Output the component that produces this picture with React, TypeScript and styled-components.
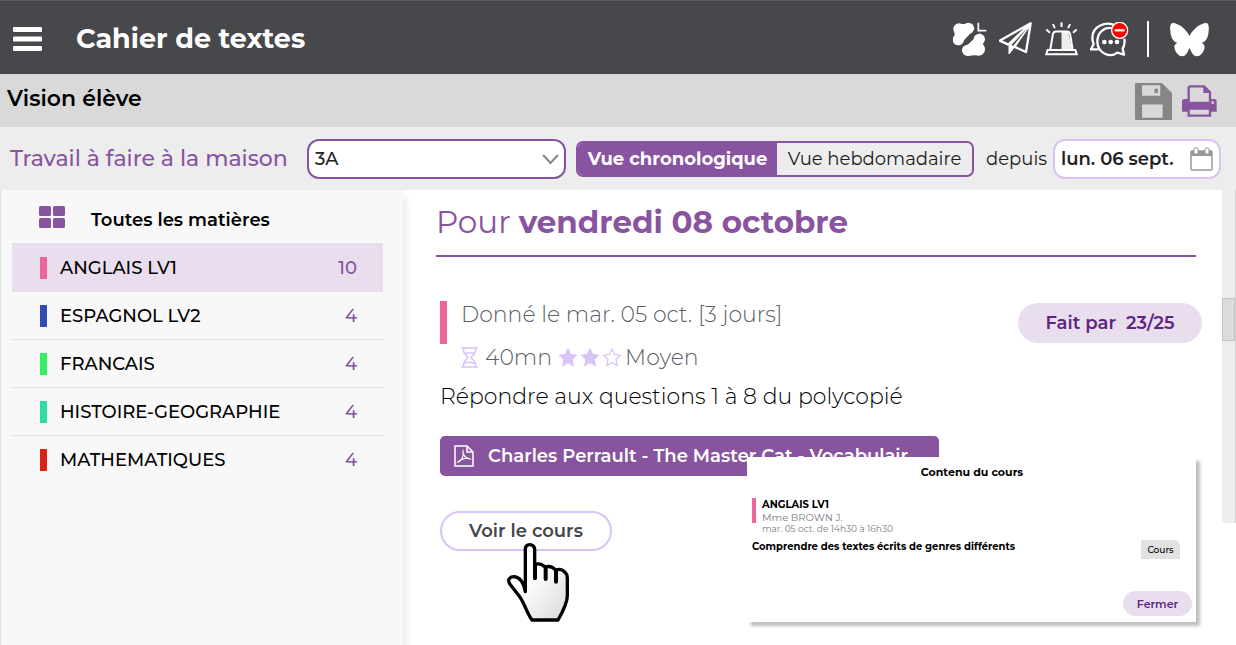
import React, { useState } from "react";
import styled, { createGlobalStyle } from "styled-components";

const purple = "#8854a0";
const deepPurple = "#5f2583";
const lilac = "#e9deee";
const lavender = "#d9c3f7";
const pink = "#ee6699";

const GlobalStyle = createGlobalStyle`
  * { box-sizing: border-box; }
  body {
    margin: 0;
    background: #fff;
    color: #000;
    font-family: Montserrat, Inter, "Liberation Sans", sans-serif;
  }
  button, input, select { font-family: inherit; }
  h1, h2, p, ul { margin: 0; padding: 0; }
`;

const Page = styled.div`
  min-height: 100vh;
  display: flex;
  flex-direction: column;
`;

const Header = styled.header`
  height: 74px;
  display: flex;
  align-items: center;
  padding: 3px 26px 0 12px;
  background: #47484c;
  border-top: 1px solid #5a5b5f;
  color: #fff;
`;

const IconButton = styled.button`
  display: flex;
  padding: 0;
  border: 0;
  background: none;
  color: inherit;
  cursor: pointer;
`;

const AppTitle = styled.h1`
  flex: 1;
  margin-left: 34px;
  font-size: 27px;
  line-height: 36px;
  font-weight: 700;
`;

const HeaderTools = styled.div`
  display: flex;
  align-items: center;
  gap: 12px;
`;

const Separator = styled.span`
  width: 2px;
  height: 36px;
  margin: 0 8px 0 6px;
  background: #fff;
`;

const SubHeader = styled.div`
  height: 53px;
  display: flex;
  align-items: center;
  justify-content: space-between;
  padding: 0 19px 0 7px;
  background: #d9d9d9;
`;

const SubTitle = styled.h2`
  margin-bottom: 4px;
  font-size: 22px;
  line-height: 28px;
  font-weight: 600;
`;

const SubTools = styled.div`
  display: flex;
  align-items: center;
  gap: 10px;
  padding-top: 2px;
  color: ${purple};
`;

const FilterBar = styled.div`
  height: 63px;
  display: flex;
  align-items: center;
  padding: 0 15px 0 10px;
  background: #ededed;
`;

const FilterLabel = styled.label`
  width: 297px;
  color: ${purple};
  font-size: 22px;
  font-weight: 500;
  white-space: nowrap;
`;

const SelectBox = styled.div`
  position: relative;
  flex: 1;
  svg {
    position: absolute;
    right: 7px;
    top: 14px;
    pointer-events: none;
  }
`;

const Select = styled.select`
  display: block;
  width: 100%;
  height: 40px;
  padding: 0 6px;
  appearance: none;
  border: 2px solid ${purple};
  border-radius: 12px;
  background: #fff;
  color: #222;
  font-size: 18px;
  font-weight: 500;
`;

const Toggle = styled.div`
  width: 398px;
  height: 36px;
  display: flex;
  margin: 0 12px 0 10px;
  border: 2px solid ${purple};
  border-radius: 7px;
  overflow: hidden;
`;

const ToggleOption = styled.button<{ $active: boolean }>`
  flex: ${(p) => (p.$active ? "1 0 199px" : "1 0 195px")};
  padding: 0;
  border: 0;
  background: ${(p) => (p.$active ? purple : "transparent")};
  color: ${(p) => (p.$active ? "#fff" : "#1c1c1c")};
  font-size: 18px;
  font-weight: ${(p) => (p.$active ? 700 : 400)};
  white-space: nowrap;
`;

const SinceLabel = styled.label`
  width: 67px;
  font-size: 18px;
  color: #1c1c1c;
`;

const DateBox = styled.div`
  width: 168px;
  height: 40px;
  display: flex;
  align-items: center;
  padding: 0 6px;
  border: 2px solid ${lavender};
  border-radius: 12px;
  background: #fff;
  color: #999;
`;

const DateInput = styled.input`
  flex: 1;
  min-width: 0;
  padding: 0;
  border: 0;
  background: none;
  color: #222;
  font-size: 18px;
  font-weight: 600;
`;

const Body = styled.div`
  flex: 1;
  display: flex;
`;

const Sidebar = styled.nav`
  position: relative;
  width: 403px;
  padding: 5px 20px 0 11px;
  background: #f8f8f8;
  border-left: 1px solid #e2e2e2;
  box-shadow: 3px 8px 8px rgba(0, 0, 0, 0.1);
`;

const AllSubjects = styled.button`
  width: 100%;
  height: 48px;
  display: flex;
  align-items: center;
  gap: 26px;
  padding: 2px 27px 0;
  border: 0;
  background: none;
  font-size: 18px;
  font-weight: 600;
  color: #000;
  svg { margin-bottom: 6px; }
`;

const SubjectList = styled.ul`
  list-style: none;
`;

const SubjectItem = styled.li`
  & + & { border-top: 1px solid ${lilac}; }
`;

const SubjectButton = styled.button<{ $active: boolean }>`
  width: 100%;
  height: ${(p) => (p.$active ? 48 : 47)}px;
  display: flex;
  align-items: center;
  gap: 13px;
  padding: 1px 26px 0 28px;
  border: 0;
  background: ${(p) => (p.$active ? lilac : "transparent")};
  color: #000;
  font-size: 18px;
  font-weight: 500;
  text-align: left;
`;

const SubjectName = styled.span`
  flex: 1;
`;

const SubjectCount = styled.span`
  color: ${purple};
`;

const Marker = styled.span<{ $color: string }>`
  width: 7px;
  height: 22px;
  background: ${(p) => p.$color};
`;

const Main = styled.main`
  position: relative;
  flex: 1;
  padding: 10px 26px 0 33px;
`;

const DayTitle = styled.h2`
  height: 57px;
  padding-top: 2px;
  border-bottom: 2px solid ${purple};
  color: ${purple};
  font-size: 31px;
  line-height: 40px;
  font-weight: 400;
  strong { font-weight: 700; }
`;

const Homework = styled.article`
  padding: 44px 0 0 4px;
`;

const HomeworkTop = styled.div`
  display: flex;
  align-items: flex-start;
  justify-content: space-between;
  margin-right: -6px;
`;

const HomeworkMeta = styled.div`
  display: flex;
  gap: 14px;
  color: #5c5f68;
  font-size: 22px;
  line-height: 27px;
  font-weight: 300;
`;

const MetaBar = styled.span`
  width: 7px;
  height: 43px;
  background: ${pink};
`;

const MetaLines = styled.div`
  display: flex;
  flex-direction: column;
  gap: 16px;
`;

const MetaRow = styled.div`
  display: flex;
  align-items: center;
  gap: 7px;
`;

const Difficulty = styled.span`
  display: flex;
  align-items: center;
  gap: 4px;
`;

const DoneBadge = styled.button`
  width: 184px;
  height: 40px;
  margin-top: 2px;
  border: 0;
  border-radius: 20px;
  background: ${lilac};
  color: ${deepPurple};
  font-size: 18px;
  font-weight: 600;
`;

const Instruction = styled.p`
  margin-top: 12px;
  font-size: 22px;
  line-height: 28px;
  font-weight: 300;
`;

const Attachment = styled.a`
  width: 499px;
  height: 40px;
  display: flex;
  align-items: center;
  gap: 14px;
  margin-top: 25px;
  padding: 0 14px;
  border-radius: 5px;
  background: ${purple};
  color: #fff;
  font-size: 18px;
  font-weight: 600;
  text-decoration: none;
  white-space: nowrap;
`;

const CourseAction = styled.div`
  position: relative;
  width: 172px;
  margin-top: 35px;
`;

const CourseButton = styled.button`
  width: 100%;
  height: 40px;
  border: 2px solid ${lavender};
  border-radius: 20px;
  background: #fff;
  color: #45464a;
  font-size: 18px;
  font-weight: 600;
`;

const Pointer = styled.svg`
  position: absolute;
  left: 67px;
  top: 32px;
  pointer-events: none;
`;

const Dialog = styled.section`
  position: absolute;
  top: 267px;
  right: 26px;
  width: 449px;
  height: 165px;
  padding: 7px 4px 6px 5px;
  display: flex;
  flex-direction: column;
  background: #fff;
  box-shadow: 4px 4px 3px rgba(0, 0, 0, 0.25);
  font-size: 10px;
  line-height: 14px;
`;

const DialogTitle = styled.h2`
  font-size: 11px;
  line-height: 16px;
  font-weight: 700;
  text-align: center;
`;

const Lesson = styled.div`
  display: flex;
  gap: 6px;
  margin-top: 18px;
`;

const LessonBar = styled.span`
  width: 4px;
  height: 25px;
  background: ${pink};
`;

const LessonText = styled.div`
  display: flex;
  flex-direction: column;
  line-height: 13px;
  color: #7b7d84;
  strong { color: #000; font-weight: 700; }
  small { font-size: 9px; line-height: 10px; }
`;

const LessonRow = styled.div`
  display: flex;
  align-items: flex-start;
  justify-content: space-between;
  margin-top: 6px;
  padding-right: 12px;
  font-weight: 700;
`;

const Tag = styled.span`
  width: 39px;
  height: 19px;
  background: #e1e1e1;
  clip-path: polygon(0 0, 35px 0, 100% 4px, 100% 100%, 0 100%);
  font-size: 9px;
  line-height: 19px;
  font-weight: 500;
  text-align: center;
`;

const CloseButton = styled.button`
  width: 69px;
  height: 25px;
  margin-top: auto;
  align-self: flex-end;
  border: 0;
  border-radius: 13px;
  background: ${lilac};
  color: ${deepPurple};
  font-size: 11px;
  font-weight: 600;
`;

const ScrollTrack = styled.div`
  width: 14px;
  height: 333px;
  padding-top: 108px;
  background: #ededed;
  border-right: 1px solid #d2d2d2;
`;

const ScrollThumb = styled.div`
  height: 43px;
  background: #dadcdd;
  border: 1px solid #c3c3c3;
`;

const MenuIcon = () => (
  <svg width="30" height="26" viewBox="0 0 30 26" fill="currentColor" aria-hidden>
    <rect x="1" y="1" width="29" height="5" rx="1" />
    <rect x="1" y="10.500" width="29" height="5" rx="1" />
    <rect x="1" y="20" width="29" height="5" rx="1" />
  </svg>
);

const CloverIcon = () => (
  <svg width="34" height="34" viewBox="3 0 102 102" aria-hidden>
    <g fill="#fff">
      <circle cx="21" cy="21" r="17" />
      <circle cx="49" cy="19" r="17" />
      <circle cx="19" cy="53" r="17" />
      <path d="M22 6H50L68 20L22 70L4 53L8 38L6 21Z" />
      <circle cx="82" cy="52" r="17" />
      <circle cx="80" cy="82" r="19" />
      <circle cx="47" cy="85" r="17" />
      <path d="M84 34L30 84L48 101L82 99L97 80L92 66L97 50Z" />
    </g>
    <path d="M16 84L82 22" stroke="#47484c" strokeWidth="6" />
    <path d="M79 2V26H103" fill="none" stroke="#fff" strokeWidth="5" />
  </svg>
);

const PlaneIcon = () => (
  <svg width="34" height="34" viewBox="3 0 102 102" fill="none" stroke="#fff" strokeWidth="7" strokeLinejoin="round" aria-hidden>
    <path d="M98 4L5 56L31 68ZM98 4L84 90L49 74Z" />
    <path d="M98 4L33 72V96L49 76Z" fill="#fff" strokeWidth="3" />
    <path d="M90 16L40 69L46 71Z" fill="#47484c" stroke="none" />
  </svg>
);

const SirenIcon = () => (
  <svg width="33" height="34" viewBox="0 0 100 102" fill="none" stroke="#fff" strokeWidth="6" aria-hidden>
    <defs>
      <pattern id="dots" width="6" height="6" patternUnits="userSpaceOnUse">
        <rect width="3" height="3" fill="#fff" />
        <rect x="3" y="3" width="3" height="3" fill="#fff" />
      </pattern>
    </defs>
    <path d="M50 28H70L82 82H50Z" fill="url(#dots)" fillOpacity="0.9" stroke="none" />
    <path d="M16 84L24 36Q26 28 34 28H66Q74 28 76 36L84 84" />
    <path d="M8 84H92L96 97H4Z" />
    <path d="M50 0V15M24 6L30 18M76 6L70 18M4 22L15 32M96 22L85 32" />
  </svg>
);

const ChatIcon = () => (
  <svg width="39" height="35" viewBox="0 0 117 105" fill="none" stroke="#fff" strokeWidth="7" strokeLinejoin="round" aria-hidden>
    <path d="M76 10C46 -4 8 14 7 46C7 58 9 62 11 66L3 82L26 82" />
    <path d="M72 20C40 10 22 36 22 58C22 96 62 108 82 92L102 98L98 80C104 70 105 62 103 50" />
    <g fill="#fff" stroke="none">
      <circle cx="43" cy="60" r="7" />
      <circle cx="62" cy="60" r="7" />
      <circle cx="81" cy="60" r="7" />
    </g>
    <circle cx="89" cy="25" r="24" fill="#ff0000" strokeWidth="4" />
    <path d="M74 25H104" strokeWidth="7" />
  </svg>
);

const ButterflyIcon = () => (
  <svg width="41" height="35" viewBox="0 0 122 105" fill="#fff" aria-hidden>
    <path d="M61 42C50 20 28 4 11 3C1 3 2 24 5 38C8 52 15 60 25 62C12 68 14 80 22 92C32 106 46 106 54 92L61 78L68 92C76 106 90 106 100 92C108 80 110 68 97 62C107 60 114 52 117 38C120 24 121 3 111 3C94 4 72 20 61 42Z" />
  </svg>
);

const SaveIcon = () => (
  <svg width="37" height="37" viewBox="0 0 110 110" aria-hidden>
    <path d="M4 0H80L110 30V106Q110 110 106 110H4Q0 110 0 106V4Q0 0 4 0Z" fill="#868686" />
    <path d="M21 7H75V38H21Z M21 64H82V103H21Z" fill="#d9d9d9" />
    <path d="M58 17H68V30H58Z" fill="#868686" />
  </svg>
);

const PrinterIcon = () => (
  <svg width="35" height="33" viewBox="0 0 105 99" aria-hidden>
    <path d="M20 50V8Q20 4 24 4H66L84 22V50" fill="none" stroke={purple} strokeWidth="7" />
    <path d="M64 2V24H86Z" fill={purple} />
    <path d="M8 42H18V50H86V42H97Q104 42 104 50V80H0V50Q0 42 8 42Z" fill={purple} />
    <path d="M20 71H84V92H20Z" fill="#d9d9d9" stroke={purple} strokeWidth="7" />
    <circle cx="92" cy="53" r="4" fill="#d9d9d9" />
  </svg>
);

const CalendarIcon = () => (
  <svg width="23" height="24" viewBox="0 0 23 24" fill="none" stroke="currentColor" aria-hidden>
    <rect x="1" y="4" width="21" height="19" rx="1" strokeWidth="1.500" />
    <path d="M1 4H22V9H1Z" fill="currentColor" stroke="none" />
    <rect x="4" y="1" width="4" height="6" rx="1" fill="#fff" />
    <rect x="15" y="1" width="4" height="6" rx="1" fill="#fff" />
  </svg>
);

const ChevronIcon = () => (
  <svg width="17" height="12" viewBox="0 0 17 12" fill="none" stroke="#888" strokeWidth="2" aria-hidden>
    <path d="M1 2L8.500 10L16 2" />
  </svg>
);

const GridIcon = () => (
  <svg width="26" height="22" viewBox="0 0 26 22" fill={purple} aria-hidden>
    <rect width="12" height="10" rx="1.500" />
    <rect x="14" width="12" height="10" rx="1.500" />
    <rect y="12" width="12" height="10" rx="1.500" />
    <rect x="14" y="12" width="12" height="10" rx="1.500" />
  </svg>
);

const HourglassIcon = () => (
  <svg width="17" height="21" viewBox="0 0 17 21" fill="none" stroke={lavender} strokeWidth="1.500" aria-hidden>
    <path d="M0 1H17M0 20H17M2.500 1V4C2.500 8 7 9 7 10.500C7 12 2.500 13 2.500 17V20M14.500 1V4C14.500 8 10 9 10 10.500C10 12 14.500 13 14.500 17V20M4 6H13M4 17C5 14.500 12 14.500 13 17" />
  </svg>
);

const StarIcon = ({ filled }: { filled: boolean }) => (
  <svg width="18" height="19" viewBox="0 0 18 19" fill={filled ? lavender : "none"} stroke={lavender} strokeWidth="1.300" aria-hidden>
    <path d="M9 1L11.500 6.500L17.300 7.200L13 11.300L14.200 17.500L9 14.500L3.800 17.500L5 11.300L0.700 7.200L6.500 6.500Z" />
  </svg>
);

const PdfIcon = () => (
  <svg width="20" height="22" viewBox="0 0 20 22" fill="none" stroke="#fff" strokeWidth="1.500" aria-hidden>
    <path d="M1 1H13L19 7V21H1ZM13 1V7H19" />
    <path d="M9 6C8 9 12 14 16 14C13 12 7 14 4 17C8 16 10 10 9 6Z" strokeWidth="1.200" />
  </svg>
);

const HandPointer = () => (
  <Pointer width="62" height="79" viewBox="0 0 186 237" aria-hidden>
    <defs>
      <linearGradient id="hand" x1="0" y1="0" x2="1" y2="1">
        <stop offset="0.400" stopColor="#fff" />
        <stop offset="1" stopColor="#d8d8d8" />
      </linearGradient>
    </defs>
    <path
      d="M55 146V20Q55 5 68 5Q82 5 83 20V65Q100 58 114 72Q134 66 146 82Q162 74 174 88Q181 94 181 104V158Q181 182 153 231H75C58 208 52 178 36 158L9 124C-1 108 10 101 22 101C40 103 50 118 55 146Z"
      fill="url(#hand)" stroke="#000" strokeWidth="10" strokeLinejoin="round"
    />
    <path d="M84 62V106M116 72V108M147 84V116" stroke="#000" strokeWidth="12" strokeLinecap="round" />
  </Pointer>
);

const subjects = [
  { name: "ANGLAIS LV1", count: 10, color: pink },
  { name: "ESPAGNOL LV2", count: 4, color: "#334bb0" },
  { name: "FRANCAIS", count: 4, color: "#33ee66" },
  { name: "HISTOIRE-GEOGRAPHIE", count: 4, color: "#2cdca4" },
  { name: "MATHEMATIQUES", count: 4, color: "#dc2318" },
];

export default function App() {
  const [selected, setSelected] = useState(0);
  const [view, setView] = useState("chrono");
  return (
    <Page>
      <GlobalStyle />
      <Header>
        <IconButton aria-label="Menu"><MenuIcon /></IconButton>
        <AppTitle>Cahier de textes</AppTitle>
        <HeaderTools>
          <IconButton aria-label="Accueil"><CloverIcon /></IconButton>
          <IconButton aria-label="Envoyer"><PlaneIcon /></IconButton>
          <IconButton aria-label="Alerte"><SirenIcon /></IconButton>
          <IconButton aria-label="Messages"><ChatIcon /></IconButton>
          <Separator />
          <IconButton aria-label="Papillon"><ButterflyIcon /></IconButton>
        </HeaderTools>
      </Header>
      <SubHeader>
        <SubTitle>Vision élève</SubTitle>
        <SubTools>
          <IconButton aria-label="Enregistrer"><SaveIcon /></IconButton>
          <IconButton aria-label="Imprimer"><PrinterIcon /></IconButton>
        </SubTools>
      </SubHeader>
      <FilterBar>
        <FilterLabel htmlFor="classe">Travail à faire à la maison</FilterLabel>
        <SelectBox>
          <Select id="classe" defaultValue="3A"><option>3A</option></Select>
          <ChevronIcon />
        </SelectBox>
        <Toggle>
          <ToggleOption $active={view === "chrono"} onClick={() => setView("chrono")}>Vue chronologique</ToggleOption>
          <ToggleOption $active={view === "hebdo"} onClick={() => setView("hebdo")}>Vue hebdomadaire</ToggleOption>
        </Toggle>
        <SinceLabel htmlFor="depuis">depuis</SinceLabel>
        <DateBox>
          <DateInput id="depuis" type="text" defaultValue="lun. 06 sept." />
          <IconButton aria-label="Calendrier"><CalendarIcon /></IconButton>
        </DateBox>
      </FilterBar>
      <Body>
        <Sidebar>
          <AllSubjects><GridIcon />Toutes les matières</AllSubjects>
          <SubjectList>
            {subjects.map((s, i) => (
              <SubjectItem key={s.name}>
                <SubjectButton $active={i === selected} onClick={() => setSelected(i)}>
                  <Marker $color={s.color} />
                  <SubjectName>{s.name}</SubjectName>
                  <SubjectCount>{s.count}</SubjectCount>
                </SubjectButton>
              </SubjectItem>
            ))}
          </SubjectList>
        </Sidebar>
        <Main>
          <DayTitle>Pour <strong>vendredi 08 octobre</strong></DayTitle>
          <Homework>
            <HomeworkTop>
              <HomeworkMeta>
                <MetaBar />
                <MetaLines>
                  <span>Donné le mar. 05 oct. [3 jours]</span>
                  <MetaRow>
                    <HourglassIcon />
                    <span>40mn</span>
                    <Difficulty>
                      <StarIcon filled />
                      <StarIcon filled />
                      <StarIcon filled={false} />
                      <span>Moyen</span>
                    </Difficulty>
                  </MetaRow>
                </MetaLines>
              </HomeworkMeta>
              <DoneBadge>Fait par&nbsp; 23/25</DoneBadge>
            </HomeworkTop>
            <Instruction>Répondre aux questions 1 à 8 du polycopié</Instruction>
            <Attachment href="#document"><PdfIcon />Charles Perrault - The Master Cat - Vocabulair</Attachment>
            <CourseAction>
              <CourseButton>Voir le cours</CourseButton>
              <HandPointer />
            </CourseAction>
          </Homework>
          <Dialog role="dialog" aria-label="Contenu du cours">
            <DialogTitle>Contenu du cours</DialogTitle>
            <Lesson>
              <LessonBar />
              <LessonText>
                <strong>ANGLAIS LV1</strong>
                <span>Mme BROWN J.</span>
                <small>mar. 05 oct. de 14h30 à 16h30</small>
              </LessonText>
            </Lesson>
            <LessonRow>
              <span>Comprendre des textes écrits de genres différents</span>
              <Tag>Cours</Tag>
            </LessonRow>
            <CloseButton>Fermer</CloseButton>
          </Dialog>
        </Main>
        <ScrollTrack><ScrollThumb /></ScrollTrack>
      </Body>
    </Page>
  );
}
